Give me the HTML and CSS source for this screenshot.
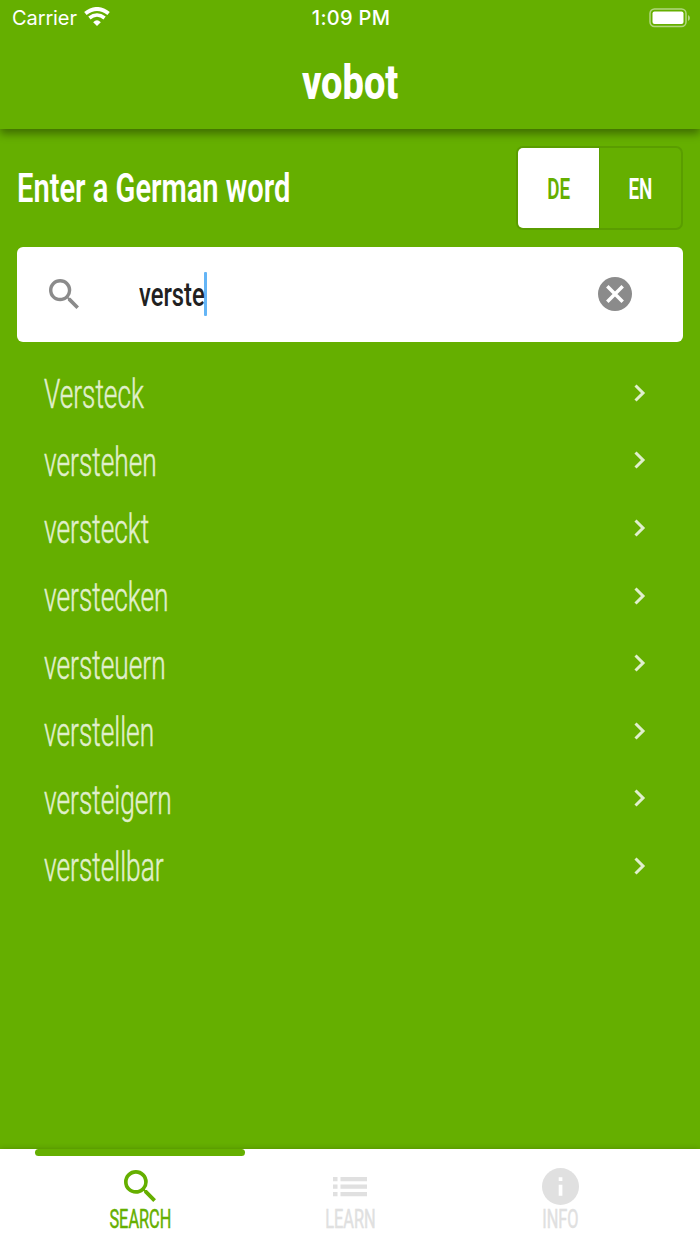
FILE: index.html
```html
<!DOCTYPE html>
<html lang="en">
<head>
<meta charset="utf-8">
<title>vobot</title>
<link rel="stylesheet" href="styles.css">
</head>
<body>
<div class="app">
  <header class="header">
    <div class="status">
      <div class="carrier"><span>Carrier</span>
        <svg width="26" height="20" viewBox="0 0 26 20" fill="none" stroke="#fff"><path d="M1.4 6.5Q13-2.6 24.6 6.5" stroke-width="3.9"/><path d="M5.4 11Q13 5 20.6 11" stroke-width="3.6"/><path d="M9.2 15.2Q13 11.4 16.8 15.2L13 19Z" fill="#fff" stroke="none"/></svg>
      </div>
      <div class="time">1:09 PM</div>
      <svg class="battery" width="42" height="20" viewBox="0 0 42 20"><rect x="1" y="1" width="36" height="17.5" rx="4.5" fill="none" stroke="#b2d780" stroke-width="1.5"/><rect x="3.5" y="3.5" width="31" height="12.5" rx="2" fill="#fff"/><path d="M39 7q2 1 2 3t-2 3z" fill="#b2d780"/></svg>
    </div>
    <h1 class="title"><span class="cond">vobot</span></h1>
  </header>
  <main class="main">
    <div class="prompt">
      <h2 class="prompt-text"><span class="cond">Enter a German word</span></h2>
      <div class="toggle">
        <div class="option selected"><span class="cond">DE</span></div>
        <div class="option"><span class="cond">EN</span></div>
      </div>
    </div>
    <div class="search">
      <svg class="search-icon" width="30" height="30" viewBox="3 3 17.5 17.5"><path fill="#8b8b8b" d="M15.5 14h-.79l-.28-.27A6.47 6.47 0 0 0 16 9.5 6.5 6.5 0 1 0 9.5 16c1.61 0 3.09-.59 4.23-1.57l.27.28v.79l5 4.99L20.49 19l-4.99-5zm-6 0C7.01 14 5 11.99 5 9.5S7.01 5 9.5 5 14 7.01 14 9.5 11.99 14 9.5 14z"/></svg>
      <div class="query"><span class="cond">verste</span></div>
      <div class="caret"></div>
      <svg class="clear" width="34" height="34" viewBox="0 0 34 34"><circle cx="17" cy="17" r="17" fill="#8b8b8b"/><path d="M9.3 9.3l15.4 15.4m0-15.4l-15.4 15.4" stroke="#fff" stroke-width="3.5"/></svg>
    </div>
    <ul class="list">
      <li class="row"><span class="cond">Versteck</span><svg class="chev" viewBox="0 0 12 18"><path d="M1.5 1.5L9 9l-7.5 7.5"/></svg></li>
      <li class="row"><span class="cond">verstehen</span><svg class="chev" viewBox="0 0 12 18"><path d="M1.5 1.5L9 9l-7.5 7.5"/></svg></li>
      <li class="row"><span class="cond">versteckt</span><svg class="chev" viewBox="0 0 12 18"><path d="M1.5 1.5L9 9l-7.5 7.5"/></svg></li>
      <li class="row"><span class="cond">verstecken</span><svg class="chev" viewBox="0 0 12 18"><path d="M1.5 1.5L9 9l-7.5 7.5"/></svg></li>
      <li class="row"><span class="cond">versteuern</span><svg class="chev" viewBox="0 0 12 18"><path d="M1.5 1.5L9 9l-7.5 7.5"/></svg></li>
      <li class="row"><span class="cond">verstellen</span><svg class="chev" viewBox="0 0 12 18"><path d="M1.5 1.5L9 9l-7.5 7.5"/></svg></li>
      <li class="row"><span class="cond">versteigern</span><svg class="chev" viewBox="0 0 12 18"><path d="M1.5 1.5L9 9l-7.5 7.5"/></svg></li>
      <li class="row"><span class="cond">verstellbar</span><svg class="chev" viewBox="0 0 12 18"><path d="M1.5 1.5L9 9l-7.5 7.5"/></svg></li>
    </ul>
  </main>
  <nav class="tabs">
    <div class="tab active">
      <svg width="32" height="32" viewBox="3 3 17.5 17.5"><path fill="currentColor" d="M15.5 14h-.79l-.28-.27A6.47 6.47 0 0 0 16 9.5 6.5 6.5 0 1 0 9.5 16c1.61 0 3.09-.59 4.23-1.57l.27.28v.79l5 4.99L20.49 19l-4.99-5zm-6 0C7.01 14 5 11.99 5 9.5S7.01 5 9.5 5 14 7.01 14 9.5 11.99 14 9.5 14z"/></svg>
      <span class="cond">SEARCH</span>
    </div>
    <div class="tab">
      <svg width="34" height="20" viewBox="0 0 34 20" fill="currentColor"><path d="M0 0h4.5v4.2H0zM7.5 0H34v4.2H7.5zM0 7.5h4.5v4.2H0zM7.5 7.5H34v4.2H7.5zM0 15h4.5v4.2H0zM7.5 15H34v4.2H7.5z"/></svg>
      <span class="cond">LEARN</span>
    </div>
    <div class="tab">
      <svg width="37" height="37" viewBox="0 0 37 37"><circle cx="18.5" cy="18.5" r="18.5" fill="currentColor"/><path d="M16.7 9.3h3.7V13h-3.7zM16.7 16.8h3.7v11h-3.7z" fill="#fff"/></svg>
      <span class="cond">INFO</span>
    </div>
  </nav>
</div>
</body>
</html>
```
FILE: styles.css
```css
* { box-sizing: border-box; }
body { margin: 0; font-family: Roboto, "Liberation Sans", sans-serif; }
h1, h2, ul { margin: 0; padding: 0; }
svg { display: block; flex: none; }
.app { width: 700px; height: 1244px; background: #65af00; color: #fff; display: flex; flex-direction: column; overflow: hidden; }
.cond { display: inline-block; white-space: nowrap; transform: scaleX(0.65); }

.header { height: 129px; background: #65af00; box-shadow: 0 5px 8px rgba(0, 0, 0, 0.36); display: flex; flex-direction: column; flex: none; }
.status { height: 36px; display: grid; grid-template-columns: 1fr auto 1fr; align-items: center; padding: 0 10px 0 12px; font: 20px/36px Inter, sans-serif; }
.carrier { display: flex; align-items: center; gap: 7px; letter-spacing: -0.1px; }
.carrier svg { margin-top: -2px; }
.time { font-weight: 500; letter-spacing: 0.3px; }
.battery { justify-self: end; margin-right: -1px; margin-top: -1px; }
.title { text-align: center; font-size: 49px; line-height: 56px; font-weight: 800; padding-top: 19px; }
.title .cond { transform: scaleX(0.775); }

.main { flex: 1; padding: 17px 17px 0; }
.prompt { height: 84px; display: flex; align-items: center; justify-content: space-between; }
.prompt-text { width: 300px; font-size: 41px; line-height: 48px; font-weight: 600; }
.prompt-text .cond { transform: scaleX(0.709); transform-origin: left; }
.toggle { width: 167px; height: 84px; border: 2px solid #5a9d00; border-radius: 7px; display: flex; overflow: hidden; }
.option { flex: 1; display: flex; align-items: center; justify-content: center; font-size: 29px; font-weight: 600; padding-top: 2px; }
.selected { background: #fff; color: #65af00; border-right: 1px solid #5a9d00; }

.search { height: 94.5px; margin-top: 17px; background: #fff; border-radius: 6px; display: flex; align-items: center; padding: 0 51px 0 32px; }
.search-icon { margin-top: -1px; }
.query { margin-left: 60px; width: 65px; padding-top: 2px; font-size: 32.5px; font-weight: 500; color: #212121; }
.query .cond { transform: scaleX(0.732); transform-origin: left; }
.caret { width: 3px; height: 44px; border-radius: 1px; background: #64b5f6; }
.clear { margin-left: auto; }

.list { list-style: none; padding: 19px 37px 0 27px; }
.row { height: 67.6px; display: flex; align-items: center; justify-content: space-between; font-size: 40px; font-weight: 300; color: #e0efcc; }
.row .cond { transform: scaleX(0.657); transform-origin: left; padding-top: 1px; -webkit-text-stroke: 0.5px #e0efcc; }
.chev { width: 12px; height: 18px; margin-top: -3px; fill: none; stroke: #e0efcc; stroke-width: 3; }

.tabs { height: 95px; background: #fff; display: flex; padding: 0 35px; flex: none; box-shadow: 0 0 6px rgba(0, 0, 0, 0.2); }
.tab { width: 210px; height: 95px; display: grid; grid-template-rows: 37px 26px; align-content: start; padding-top: 19px; justify-items: center; align-items: center; color: #e0e0e0; font-size: 25.5px; line-height: 26px; position: relative; }
.tab .cond { transform: scaleX(0.64); padding-top: 1px; -webkit-text-stroke: 0.5px currentColor; }
.active { color: #65af00; }
.active svg { margin-top: -2px; }
.active::before { content: ""; position: absolute; left: 0; top: 0; width: 210px; height: 7px; border-radius: 4px; background: #65af00; }
```
